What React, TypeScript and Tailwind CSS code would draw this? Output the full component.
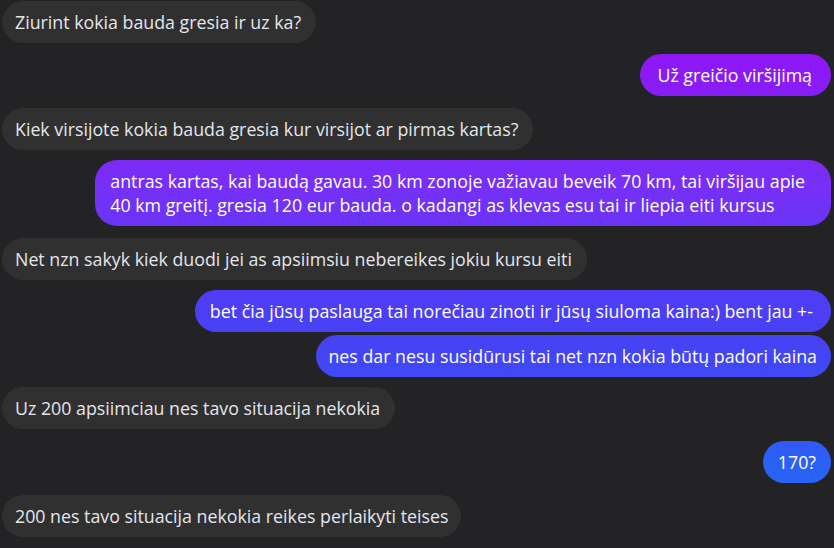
import React from 'react';

type Msg = { id: number; mine: boolean; lines: string[]; gap: string; pad?: string };

const messages: Msg[] = [
    { id: 1, mine: false, lines: ['Ziurint kokia bauda gresia ir uz ka?'], gap: 'mt-0' },
    { id: 2, mine: true, lines: ['Už greičio viršijimą'], gap: 'mt-[11px]', pad: 'pl-[17px] pr-[19px]' },
    { id: 3, mine: false, lines: ['Kiek virsijote kokia bauda gresia kur virsijot ar pirmas kartas?'], gap: 'mt-[12px]' },
    {
        id: 4,
        mine: true,
        lines: [
            'antras kartas, kai baudą gavau. 30 km zonoje važiavau beveik 70 km, tai viršijau apie',
            '40 km greitį. gresia 120 eur bauda. o kadangi as klevas esu tai ir liepia eiti kursus',
        ],
        gap: 'mt-[10px]',
        pad: 'pl-[15px] pr-[26px]',
    },
    { id: 5, mine: false, lines: ['Net nzn sakyk kiek duodi jei as apsiimsiu nebereikes jokiu kursu eiti'], gap: 'mt-[12px]' },
    { id: 6, mine: true, lines: ['bet čia jūsų paslauga tai norečiau zinoti ir jūsų siuloma kaina:) bent jau +-'], gap: 'mt-[10px]', pad: 'pl-[15px] pr-[18px]' },
    { id: 7, mine: true, lines: ['nes dar nesu susidūrusi tai net nzn kokia būtų padori kaina'], gap: 'mt-[3px]', pad: 'pl-[12px] pr-[14px]' },
    { id: 8, mine: false, lines: ['Uz 200 apsiimciau nes tavo situacija nekokia'], gap: 'mt-[10px]' },
    { id: 9, mine: true, lines: ['170?'], gap: 'mt-[12px]', pad: 'pl-[15px] pr-[15px]' },
    { id: 10, mine: false, lines: ['200 nes tavo situacija nekokia reikes perlaikyti teises'], gap: 'mt-[12px]', pad: 'pl-[13px] pr-[13px]' },
];

function Bubble({ msg }: { msg: Msg }) {
    const multi = msg.lines.length > 1;
    return (
        <div className={`flex ${msg.mine ? 'justify-end pr-[3px]' : 'justify-start pl-[2px]'} ${msg.gap}`}>
            <div
                className={
                    msg.mine
                        ? `bg-fixed bg-[linear-gradient(180deg,#9a10f7_0px,#8b1af6_75px,#7630f6_190px,#4c3ef5_310px,#4345f4_357px,#2b60f5_463px,#2268f5_548px)] text-white ${multi ? 'rounded-[22px]' : 'rounded-full'}`
                        : 'bg-[#303031] text-[#e4e6eb] rounded-full'
                }
            >
                <div className={`${msg.pad ?? 'pl-[13px] pr-[15px]'} py-[9px] text-[17.8px] leading-[24px] whitespace-nowrap`}>
                    {msg.lines.map((l, i) => (
                        <div key={i}>{l}</div>
                    ))}
                </div>
            </div>
        </div>
    );
}

export default function App() {
    return (
        <div
            className="w-[834px] h-[548px] overflow-hidden bg-[#232325]"
            style={{ fontFamily: '"Open Sans", "Noto Sans", sans-serif' }}
        >
            <div className="flex flex-col pt-[1px]">
                {messages.map((m) => (
                    <Bubble key={m.id} msg={m} />
                ))}
            </div>
        </div>
    );
}
